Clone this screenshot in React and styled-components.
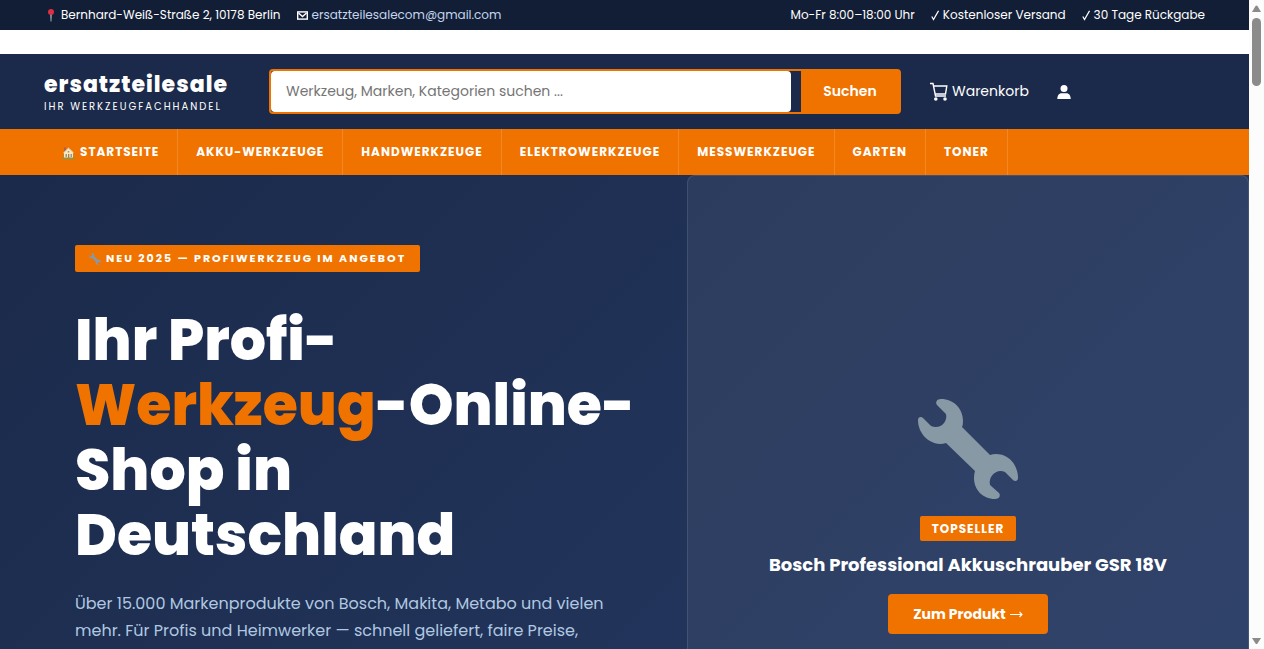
import React from "react";
import styled, { createGlobalStyle } from "styled-components";

const c = {
  navy: "#1b2a4a",
  dark: "#121e35",
  orange: "#f07300",
  mist: "#b0c8e0",
};

const Global = createGlobalStyle`
  *, *::before, *::after { box-sizing: border-box; }
  body {
    margin: 0;
    background: #fff;
    color: #fff;
    font-family: Poppins, Inter, "Open Sans", sans-serif;
    font-size: 16px;
  }
  a { color: inherit; text-decoration: none; }
  button, input { font: inherit; }
`;

const Window = styled.div`
  display: flex;
  height: 100vh;
  overflow: hidden;
`;

const Page = styled.div`
  flex: 1;
  min-width: 0;
  overflow: hidden;
`;

const ScrollTrack = styled.div`
  display: flex;
  flex-direction: column;
  align-items: center;
  gap: 5px;
  width: 15px;
  padding: 5px 0 4px;
  background: #fcfcfc;
`;

const ScrollThumb = styled.div`
  width: 9px;
  height: 68px;
  margin-bottom: auto;
  border-radius: 5px;
  background: #8b8b8b;
`;

const TopBar = styled.div`
  display: flex;
  justify-content: space-between;
  align-items: center;
  height: 30px;
  padding: 0 44px;
  background: ${c.dark};
  font-size: 12px;
  white-space: nowrap;
`;

const TopGroup = styled.div`
  display: flex;
  gap: 16px;
`;

const TopItem = styled.span`
  display: flex;
  align-items: center;
  gap: 4px;
`;

const MailLink = styled.a`
  color: #c5d5ec;
`;

const Header = styled.header`
  display: flex;
  align-items: center;
  height: 75px;
  margin-top: 24px;
  padding: 0 44px;
  background: ${c.navy};
`;

const Logo = styled.a`
  display: flex;
  flex-direction: column;
  flex: 0 0 225px;
  gap: 2px;
  padding-top: 2px;
  white-space: nowrap;
`;

const LogoName = styled.span`
  font-size: 22px;
  line-height: 26px;
  font-weight: 800;
  letter-spacing: 1px;
`;

const LogoTag = styled.span`
  font-size: 10px;
  line-height: 14px;
  letter-spacing: 2px;
`;

const Search = styled.form`
  display: flex;
  flex: 1;
  gap: 10px;
  max-width: 632px;
  height: 45px;
  border: 2px solid ${c.orange};
  border-radius: 4px;
`;

const SearchInput = styled.input`
  flex: 1;
  min-width: 0;
  padding: 0 15px;
  border: 0;
  border-radius: 4px;
  background: #fff;
  font-size: 14px;
  &::placeholder { color: #757575; opacity: 1; }
`;

const SearchButton = styled.button`
  width: 98px;
  padding: 0;
  border: 0;
  background: ${c.orange};
  color: #fff;
  font-size: 14px;
  font-weight: 600;
`;

const HeaderLinks = styled.div`
  display: flex;
  align-items: center;
  gap: 28px;
  margin-left: 29px;
`;

const HeaderLink = styled.a`
  display: flex;
  align-items: center;
  gap: 4px;
  font-size: 14px;
`;

const Nav = styled.nav`
  display: flex;
  height: 46px;
  padding: 0 44px;
  background: ${c.orange};
`;

const NavLink = styled.a`
  display: flex;
  align-items: center;
  gap: 5px;
  padding: 0 18px;
  border-right: 1px solid rgba(255, 255, 255, 0.15);
  font-size: 12px;
  font-weight: 700;
  letter-spacing: 1px;
  white-space: nowrap;
  text-transform: uppercase;
`;

const Hero = styled.main`
  display: grid;
  grid-template-columns: 55fr 45fr;
  min-height: 683px;
  background: linear-gradient(135deg, ${c.navy} 0%, #23365e 70%, #243861 100%);
`;

const HeroText = styled.section`
  padding: 70px 20px 70px 75px;
`;

const Tag = styled.span`
  display: inline-flex;
  align-items: center;
  gap: 5px;
  height: ${(p) => (p.$small ? 25 : 27)}px;
  padding: 0 ${(p) => (p.$small ? 12 : 14)}px;
  border-radius: 2px;
  background: ${c.orange};
  font-size: ${(p) => (p.$small ? 12 : 11)}px;
  font-weight: 700;
  letter-spacing: ${(p) => (p.$small ? 1 : 2)}px;
  white-space: nowrap;
`;

const Title = styled.h1`
  margin: 36px 0 0;
  font-size: 57px;
  line-height: 65px;
  font-weight: 800;
  white-space: nowrap;
  em { color: ${c.orange}; font-style: normal; }
`;

const Lead = styled.p`
  margin: 22px 0 0;
  color: ${c.mist};
  font-size: 16px;
  line-height: 27px;
  white-space: nowrap;
`;

const Card = styled.section`
  display: flex;
  flex-direction: column;
  align-items: center;
  justify-content: center;
  border: 1px solid rgba(255, 255, 255, 0.1);
  border-radius: 8px;
  background: rgba(255, 255, 255, 0.06);
`;

const CardTitle = styled.h2`
  margin: 11px 0 17px;
  font-size: 18px;
  line-height: 25px;
  font-weight: 700;
  white-space: nowrap;
`;

const CardLink = styled.a`
  display: flex;
  align-items: center;
  justify-content: center;
  gap: 4px;
  width: 160px;
  height: 40px;
  border-radius: 4px;
  background: ${c.orange};
  font-size: 14px;
  font-weight: 700;
`;

const BigIcon = styled.div`
  height: 100px;
  margin-bottom: 17px;
`;

const Wrench = ({ size, color }) => (
  <svg width={size} height={size} viewBox="0 0 100 100" fill={color} aria-hidden="true">
    <path d="M23 0C36 0 45 10 45 22Q45 26 44 28L72 56Q75 55 78 55C91 55 100 66 100 79C100 82 97 83 95 81L87 73C79 69 70 77 72 86L81 94C83 97 81 100 77 100C64 100 56 90 56 79Q56 75 57 72L28 44Q25 45 22 45C9 44 0 33 0 21C0 18 3 17 5 19L13 27C22 31 30 23 28 15L19 6C17 3 19 0 23 0Z" />
  </svg>
);

const Pin = () => (
  <svg width="13" height="13" viewBox="0 0 13 13" aria-hidden="true">
    <path d="M6 5h2l-.5 7.5h-1z" fill="#8795a5" />
    <circle cx="7" cy="3" r="3" fill="#dd2e44" />
  </svg>
);

const Mail = () => (
  <svg width="11" height="9" viewBox="0 0 11 9" fill="none" stroke="#fff" strokeWidth="1.4" aria-hidden="true">
    <rect x="0.7" y="0.9" width="9.6" height="7.2" />
    <path d="M1.500 2 5.500 5.500 9.500 2" />
  </svg>
);

const Check = () => (
  <svg width="8" height="11" viewBox="0 0 8 11" fill="none" stroke="#fff" aria-hidden="true">
    <path d="M.8 6.500 2.500 9.500 7.500.8" strokeWidth="1.200" />
  </svg>
);

const House = () => (
  <svg width="13" height="13" viewBox="0 0 13 13" aria-hidden="true">
    <path d="M2 12V6l4.500-4L11 6v6z" fill="#ffe8b6" />
    <path d="M2 1.500h2v3L2 6z" fill="#b0604a" />
    <path d="M1.200 7 6.500 2l5.300 5" fill="none" stroke="#cfc0a0" strokeWidth="1" />
    <path d="M3.500 8h1.500v3H3.500zM8.500 8H10v3H8.500zM5.700 5h1.600v1.500H5.700z" fill="#8899a6" />
    <path d="M6 8h1.300v4H6z" fill="#b07a50" />
    <path d="M0 11.500h13V13H0z" fill="#7c9a50" />
  </svg>
);

const Cart = () => (
  <svg width="18" height="19" viewBox="0 0 18 19" aria-hidden="true">
    <path d="M0 1.500h3L5.500 14H16M3.500 4h13.300L15.500 12H5" fill="none" stroke="#fff" strokeWidth="1.400" />
    <circle cx="5.800" cy="17" r="1.800" fill="#fff" />
    <circle cx="15" cy="17" r="1.800" fill="#fff" />
  </svg>
);

const Person = () => (
  <svg width="14" height="14" viewBox="0 0 14 14" fill="#fff" aria-hidden="true">
    <circle cx="7" cy="3.500" r="3.500" />
    <path d="M.3 14C.3 10.500 2 8.200 4.500 8.200h5c2.500 0 4.200 2.300 4.200 5.800z" />
  </svg>
);

const LongArrow = () => (
  <svg width="13" height="7" viewBox="0 0 13 7" fill="none" stroke="#fff" aria-hidden="true">
    <path d="M0 3.500h12M9.500 1 12 3.500 9.500 6" strokeWidth="1.100" />
  </svg>
);

const Arrow = ({ down }) => (
  <svg width="9" height="8" viewBox="0 0 9 8" fill="#8b8b8b" aria-hidden="true">
    <path d={down ? "M0 1h9L5.500 6.500q-1 1-2 0z" : "M0 7h9L5.500 1q-1-1-2 0z"} />
  </svg>
);

const categories = [
  "Akku-Werkzeuge",
  "Handwerkzeuge",
  "Elektrowerkzeuge",
  "Messwerkzeuge",
  "Garten",
  "Toner",
];

export default function App() {
  return (
    <>
      <Global />
      <Window>
        <Page>
          <TopBar>
            <TopGroup>
              <TopItem><Pin />Bernhard-Weiß-Straße 2, 10178 Berlin</TopItem>
              <TopItem>
                <Mail />
                <MailLink href="mailto:ersatzteilesalecom@gmail.com">ersatzteilesalecom@gmail.com</MailLink>
              </TopItem>
            </TopGroup>
            <TopGroup>
              <TopItem>Mo-Fr 8:00–18:00 Uhr</TopItem>
              <TopItem><Check />Kostenloser Versand</TopItem>
              <TopItem><Check />30 Tage Rückgabe</TopItem>
            </TopGroup>
          </TopBar>
          <Header>
            <Logo href="#">
              <LogoName>ersatzteilesale</LogoName>
              <LogoTag>IHR WERKZEUGFACHHANDEL</LogoTag>
            </Logo>
            <Search onSubmit={(e) => e.preventDefault()}>
              <SearchInput
                type="text"
                aria-label="Suche"
                placeholder="Werkzeug, Marken, Kategorien suchen ..."
              />
              <SearchButton type="submit">Suchen</SearchButton>
            </Search>
            <HeaderLinks>
              <HeaderLink href="#warenkorb"><Cart />Warenkorb</HeaderLink>
              <HeaderLink href="#konto" aria-label="Konto"><Person /></HeaderLink>
            </HeaderLinks>
          </Header>
          <Nav>
            <NavLink href="#"><House />Startseite</NavLink>
            {categories.map((name) => (
              <NavLink key={name} href={"#" + name.toLowerCase()}>{name}</NavLink>
            ))}
          </Nav>
          <Hero>
            <HeroText>
              <Tag><Wrench size={12} color="#8899a6" />NEU 2025 — PROFIWERKZEUG IM ANGEBOT</Tag>
              <Title>
                Ihr Profi-<br />
                <em>Werkzeug</em>-Online-<br />
                Shop in<br />
                Deutschland
              </Title>
              <Lead>
                Über 15.000 Markenprodukte von Bosch, Makita, Metabo und vielen<br />
                mehr. Für Profis und Heimwerker — schnell geliefert, faire Preise,
              </Lead>
            </HeroText>
            <Card>
              <BigIcon><Wrench size={100} color="#8899a6" /></BigIcon>
              <Tag $small>TOPSELLER</Tag>
              <CardTitle>Bosch Professional Akkuschrauber GSR 18V</CardTitle>
              <CardLink href="#produkt">Zum Produkt<LongArrow /></CardLink>
            </Card>
          </Hero>
        </Page>
        <ScrollTrack aria-hidden="true">
          <Arrow />
          <ScrollThumb />
          <Arrow down />
        </ScrollTrack>
      </Window>
    </>
  );
}
